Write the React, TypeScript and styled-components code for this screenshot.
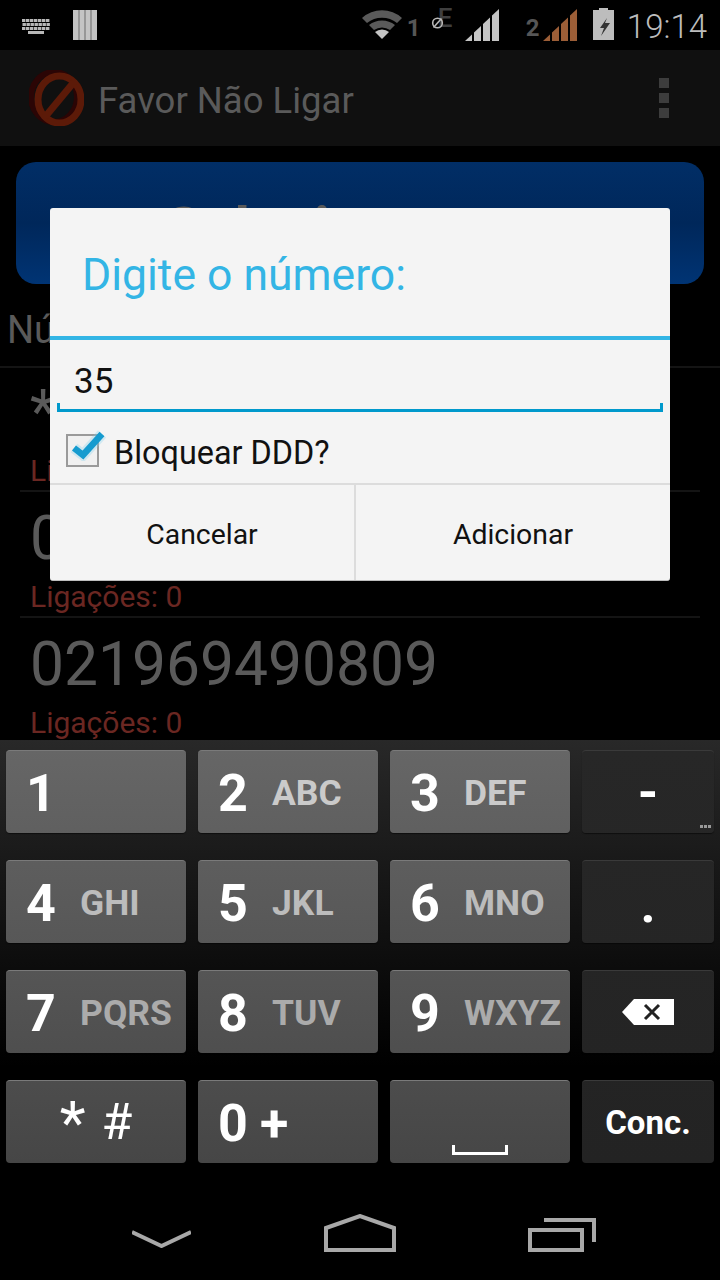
import React from 'react';
import styled, { createGlobalStyle } from 'styled-components';

const GlobalStyle = createGlobalStyle`
  html, body {
    margin: 0;
    padding: 0;
    background: #000;
  }
  * {
    box-sizing: border-box;
  }
`;

const Screen = styled.div`
  position: relative;
  width: 720px;
  height: 1280px;
  overflow: hidden;
  display: flex;
  flex-direction: column;
  background: #000;
  font-family: Roboto, "Liberation Sans", sans-serif;
`;

const StatusBar = styled.div`
  height: 50px;
  flex: none;
  display: flex;
  align-items: center;
  justify-content: space-between;
  padding: 0 13px 0 22px;
`;

const StatusGroup = styled.div`
  display: flex;
  align-items: center;
`;

const StatusIcon = styled.svg<{ $left?: number; $top?: number }>`
  display: block;
  flex: none;
  margin-left: ${p => p.$left ?? 0}px;
  margin-top: ${p => p.$top ?? 0}px;
`;

const SimLabel = styled.span<{ $left: number }>`
  margin-left: ${p => p.$left}px;
  margin-top: 5px;
  width: 12px;
  font-size: 24px;
  line-height: 28px;
  font-weight: 700;
  color: #565656;
`;

const DataBadge = styled.span`
  position: relative;
  width: 32px;
  height: 32px;
  margin-left: 12px;
  flex: none;
`;

const DataLetter = styled.span`
  position: absolute;
  left: 7px;
  top: -4px;
  font-size: 26px;
  line-height: 26px;
  font-weight: 500;
  color: #3f3f3f;
`;

const DataBlocked = styled.svg`
  position: absolute;
  left: 0;
  top: 8px;
`;

const Clock = styled.span`
  margin-left: 13px;
  margin-top: 3px;
  font-size: 33px;
  line-height: 50px;
  color: #bdbdbd;
  font-weight: 300;
`;

const ActionBar = styled.div`
  height: 96px;
  flex: none;
  display: flex;
  align-items: center;
  padding: 0 51px 0 29px;
  background: #101010;
`;

const AppTitle = styled.div`
  margin-left: 14px;
  padding-top: 4px;
  flex: 1;
  font-size: 36.5px;
  color: #5a5a5a;
`;

const OverflowMenu = styled.div`
  display: flex;
  flex-direction: column;
  gap: 5px;
`;

const OverflowDot = styled.span`
  width: 10px;
  height: 10px;
  background: #3d3d3d;
`;

const Content = styled.div`
  flex: 1;
  min-height: 0;
  overflow: hidden;
  display: flex;
  flex-direction: column;
  padding-top: 16px;
`;

const PickButton = styled.div`
  margin: 0 16px;
  height: 122px;
  flex: none;
  border-radius: 20px;
  background: linear-gradient(to bottom, #012e66 0%, #00275a 50%, #003474 100%);
  display: flex;
  align-items: center;
  padding: 10px 0 0 149px;
  font-size: 60px;
  font-weight: 700;
  color: #5a5a5a;
`;

const ListHeader = styled.div`
  height: 84px;
  flex: none;
  margin-bottom: -2px;
  display: flex;
  align-items: center;
  padding: 10px 0 0 7px;
  font-size: 38px;
  color: #5a5a5a;
  border-bottom: 2px solid #141414;
`;

const NumberRow = styled.div`
  flex: none;
  height: 126px;
  margin: 0 20px;
  padding-left: 10px;
  border-bottom: 2px solid #141414;
`;

const PhoneNumber = styled.div`
  height: 88px;
  padding-top: 4px;
  display: flex;
  align-items: center;
  font-size: 60.5px;
  color: #5a5a5a;
`;

const CallCount = styled.div`
  font-size: 30px;
  line-height: 34px;
  color: #6b2722;
`;

const Keyboard = styled.div`
  flex: none;
  height: 430px;
  padding: 10px 6px 0;
  display: grid;
  grid-template-columns: 180px 180px 180px 132px;
  grid-auto-rows: 83px;
  column-gap: 12px;
  row-gap: 27px;
  background: linear-gradient(to bottom, #282828 0%, #000 76%);
`;

const Key = styled.div<{ $dark?: boolean; $center?: boolean }>`
  position: relative;
  display: flex;
  align-items: center;
  justify-content: ${p => (p.$center ? 'center' : 'flex-start')};
  padding-left: ${p => (p.$center ? 0 : 20)}px;
  border-radius: 4px;
  color: #fff;
  background: ${p =>
    p.$dark
      ? 'linear-gradient(to bottom, #272727 750px, #232323 1163px) fixed'
      : 'linear-gradient(to bottom, #666 750px, #464646 1163px) fixed'};
  border-top: 1px solid ${p => (p.$dark ? '#3a3a3a' : '#7a7a7a')};
  box-shadow: 0 1px 1px rgba(0, 0, 0, 0.5);
`;

const Digit = styled.span`
  width: 54px;
  flex: none;
  margin-top: 3px;
  font-size: 52px;
  line-height: 83px;
  font-weight: 700;
`;

const Letters = styled.span<{ $tone: string }>`
  margin-top: 3px;
  font-size: 35.5px;
  line-height: 83px;
  font-weight: 700;
  color: ${p => p.$tone};
`;

const Plus = styled.span`
  margin-left: -12px;
  margin-top: 3px;
  font-size: 52px;
  line-height: 83px;
  font-weight: 700;
`;

const Symbols = styled.span`
  display: flex;
  gap: 16px;
  font-size: 50px;
  line-height: 83px;
`;

const Star = styled.span`
  font-size: 60px;
  line-height: 83px;
`;

const Punct = styled.span<{ $shift: number }>`
  margin-top: ${p => p.$shift}px;
  font-size: 52px;
  font-weight: 700;
  line-height: 48px;
`;

const MoreHint = styled.span`
  position: absolute;
  right: 3px;
  bottom: 5px;
  display: flex;
  gap: 1px;
`;

const MoreDot = styled.i`
  display: block;
  width: 3px;
  height: 3px;
  background: #999;
`;

const SpaceGlyph = styled.svg`
  position: absolute;
  left: 62px;
  bottom: 8px;
`;

const DoneLabel = styled.span`
  font-size: 33px;
  font-weight: 700;
`;

const NavBar = styled.div`
  height: 110px;
  flex: none;
  display: flex;
  align-items: flex-start;
  justify-content: space-between;
  padding: 0 124px 0 132px;
`;

const NavIcon = styled.svg<{ $top: number }>`
  display: block;
  margin-top: ${p => p.$top}px;
`;

const Dialog = styled.div`
  position: absolute;
  left: 50px;
  top: 208px;
  width: 620px;
  height: 373px;
  border-radius: 3px;
  background: #f4f4f4;
  border-bottom: 1px solid #bdbdbd;
  display: flex;
  flex-direction: column;
`;

const DialogTitle = styled.div`
  height: 132px;
  flex: none;
  display: flex;
  align-items: center;
  padding: 6px 0 0 32px;
  font-size: 44.5px;
  color: #33b5e5;
  border-bottom: 4px solid #33b5e5;
`;

const NumberField = styled.div`
  position: relative;
  height: 72px;
  flex: none;
  margin: 0 7px;
  padding: 14px 0 0 17px;
  font-size: 35px;
  line-height: 56px;
  color: #111;
  border-bottom: 3px solid #0099cc;

  &::before,
  &::after {
    content: '';
    position: absolute;
    bottom: 0;
    width: 3px;
    height: 6px;
    background: #0099cc;
  }
  &::before {
    left: 0;
  }
  &::after {
    right: 0;
  }
`;

const CheckRow = styled.div`
  height: 73px;
  flex: none;
  display: flex;
  align-items: center;
  padding: 11px 0 0 16px;
  gap: 15px;
  border-bottom: 2px solid #dcdcdc;
  font-size: 32.4px;
  color: #111;
`;

const CheckBox = styled.span`
  position: relative;
  width: 33px;
  height: 33px;
  flex: none;
  margin-top: -6px;
  border: 2px solid #9a9a9a;
  background: #f0f0f0;
`;

const CheckMark = styled.svg`
  position: absolute;
  left: 2px;
  top: -11px;
`;

const DialogButtons = styled.div`
  flex: 1;
  display: flex;
`;

const DialogButton = styled.div<{ $grow: number; $divider?: boolean }>`
  width: ${p => p.$grow}px;
  flex: none;
  display: flex;
  align-items: center;
  justify-content: center;
  padding-top: 3px;
  font-size: 28.4px;
  color: #111;
  border-right: ${p => (p.$divider ? '2px solid #dcdcdc' : 'none')};
`;

const Signal = ({ color, left }: { color: string; left: number }) => (
  <StatusIcon $left={left} width="34" height="32" viewBox="0 0 34 32" fill={color}>
    <polygon points="0,32 7,25.4 7,32" />
    <polygon points="9,32 9,23.5 16,17 16,32" />
    <polygon points="18,32 18,15 25,8.5 25,32" />
    <polygon points="27,32 27,6.6 34,0 34,32" />
  </StatusIcon>
);

const keypad = [
  { d: '1', l: '', tone: '#cacaca' },
  { d: '2', l: 'ABC', tone: '#cacaca' },
  { d: '3', l: 'DEF', tone: '#cacaca' },
  { d: '4', l: 'GHI', tone: '#bcbcbc' },
  { d: '5', l: 'JKL', tone: '#bcbcbc' },
  { d: '6', l: 'MNO', tone: '#bcbcbc' },
  { d: '7', l: 'PQRS', tone: '#ababab' },
  { d: '8', l: 'TUV', tone: '#ababab' },
  { d: '9', l: 'WXYZ', tone: '#ababab' },
];

const DigitKey = ({ d, l, tone }: { d: string; l: string; tone: string }) => (
  <Key>
    <Digit>{d}</Digit>
    <Letters $tone={tone}>{l}</Letters>
  </Key>
);

// keyboard status glyph: three rows of small keys and a space bar
const kbRows = [0, 4, 8];
const kbCols = [0, 4, 8, 12, 16, 20, 24];

export default function App() {
  return (
    <Screen>
      <GlobalStyle />
      <StatusBar>
        <StatusGroup>
          <StatusIcon width="29" height="15" viewBox="0 0 29 15" fill="#b8b8b8" $top={2}>
            {kbRows.map(y =>
              kbCols.map(x => <rect key={`${x}-${y}`} x={x + (y === 4 ? 0.5 : 0)} y={y} width="3.4" height="3" />)
            )}
            <rect x="6" y="12" width="16" height="3" />
          </StatusIcon>
          <StatusIcon $left={22} width="24" height="30" viewBox="0 0 24 30">
            <rect width="24" height="30" fill="#c4c4c4" />
            <rect x="5.5" width="1" height="30" fill="#6a6a6a" />
            <rect x="11.5" width="1" height="30" fill="#6a6a6a" />
            <rect x="17.5" width="1" height="30" fill="#6a6a6a" />
          </StatusIcon>
        </StatusGroup>
        <StatusGroup>
          <StatusIcon width="40" height="30" viewBox="0 0 40 30" $top={-2}>
            <path d="M0 9 A30 30 0 0 1 40 9 L35 14 A24 24 0 0 0 5 14 Z" fill="#5a5a5a" />
            <path d="M7 16 A21 21 0 0 1 33 16 L28 21 A14 14 0 0 0 12 21 Z" fill="#5a5a5a" />
            <path d="M20 30 L13 23 A11 11 0 0 1 27 23 Z" fill="#c4c4c4" />
          </StatusIcon>
          <SimLabel $left={5}>1</SimLabel>
          <DataBadge>
            <DataLetter>E</DataLetter>
            <DataBlocked width="13" height="12" viewBox="0 0 13 12" fill="none" stroke="#b8b8b8" strokeWidth="1.6">
              <circle cx="6.5" cy="6" r="4.8" />
              <path d="M2.5 10.5 L10.5 1.5" />
            </DataBlocked>
          </DataBadge>
          <Signal color="#c4c4c4" left={2} />
          <SimLabel $left={27}>2</SimLabel>
          <Signal color="#9c5e37" left={5} />
          <StatusIcon $left={16} $top={-2} width="21" height="32" viewBox="0 0 21 32">
            <path d="M6 0 H15 V2 H21 V32 H0 V2 H6 Z" fill="#bdbdbd" />
            <path d="M14 10 L7 20 H11 L8 28 L17 15 H12 Z" fill="#333" />
          </StatusIcon>
          <Clock>19:14</Clock>
        </StatusGroup>
      </StatusBar>

      <ActionBar>
        <svg width="55" height="56" viewBox="0 0 55 56" fill="none">
          <ellipse cx="25" cy="27" rx="23" ry="25" stroke="#2b0505" strokeWidth="6" />
          <ellipse cx="30.5" cy="29.5" rx="21.5" ry="23.5" stroke="#5c1a08" strokeWidth="7" />
          <path d="M16 47 L45 12" stroke="#5c1a08" strokeWidth="7" />
        </svg>
        <AppTitle>Favor Não Ligar</AppTitle>
        <OverflowMenu>
          <OverflowDot />
          <OverflowDot />
          <OverflowDot />
        </OverflowMenu>
      </ActionBar>

      <Content>
        <PickButton>Selecionar</PickButton>
        <ListHeader>Números bloqueados</ListHeader>
        <NumberRow>
          <PhoneNumber>*35</PhoneNumber>
          <CallCount>Ligações: 0</CallCount>
        </NumberRow>
        <NumberRow>
          <PhoneNumber>021969490809</PhoneNumber>
          <CallCount>Ligações: 0</CallCount>
        </NumberRow>
        <NumberRow>
          <PhoneNumber>021969490809</PhoneNumber>
          <CallCount>Ligações: 0</CallCount>
        </NumberRow>
      </Content>

      <Keyboard>
        <DigitKey {...keypad[0]} />
        <DigitKey {...keypad[1]} />
        <DigitKey {...keypad[2]} />
        <Key $dark $center>
          <Punct $shift={1}>-</Punct>
          <MoreHint>
            <MoreDot />
            <MoreDot />
            <MoreDot />
          </MoreHint>
        </Key>
        <DigitKey {...keypad[3]} />
        <DigitKey {...keypad[4]} />
        <DigitKey {...keypad[5]} />
        <Key $dark $center>
          <Punct $shift={5}>.</Punct>
        </Key>
        <DigitKey {...keypad[6]} />
        <DigitKey {...keypad[7]} />
        <DigitKey {...keypad[8]} />
        <Key $dark $center>
          <svg width="52" height="26" viewBox="0 0 52 26">
            <path d="M0 13 L12 0 H52 V26 H12 Z" fill="#fff" />
            <path d="M23 6 L37 20 M37 6 L23 20" stroke="#222" strokeWidth="3" />
          </svg>
        </Key>
        <Key $center>
          <Symbols>
            <Star>*</Star>
            <span>#</span>
          </Symbols>
        </Key>
        <Key>
          <Digit>0</Digit>
          <Plus>+</Plus>
        </Key>
        <Key $center>
          <SpaceGlyph width="56" height="10" viewBox="0 0 56 10" fill="none" stroke="#fff" strokeWidth="3">
            <path d="M1.5 0 V8.5 H54.5 V0" />
          </SpaceGlyph>
        </Key>
        <Key $dark $center>
          <DoneLabel>Conc.</DoneLabel>
        </Key>
      </Keyboard>

      <NavBar>
        <NavIcon $top={60} width="59" height="18" viewBox="0 0 59 18" fill="none" stroke="#a8a8a8" strokeWidth="4">
          <path d="M0 2 L29.5 16 L59 2" />
        </NavIcon>
        <NavIcon $top={44} width="72" height="38" viewBox="0 0 72 38" fill="none" stroke="#a8a8a8" strokeWidth="4">
          <path d="M2 14 L36 2 L70 14 V36 H2 Z" />
        </NavIcon>
        <NavIcon $top={48} width="68" height="34" viewBox="0 0 68 34" fill="none" stroke="#a8a8a8" strokeWidth="4">
          <rect x="2" y="12" width="52" height="20" />
          <path d="M16 2 H66 V24" />
        </NavIcon>
      </NavBar>

      <Dialog>
        <DialogTitle>Digite o número:</DialogTitle>
        <NumberField>35</NumberField>
        <CheckRow>
          <CheckBox>
            <CheckMark width="36" height="36" viewBox="0 0 36 36" fill="none">
              <path d="M4 23 L13 30 L32 9" stroke="#7fd0ee" strokeWidth="11" opacity="0.3" />
              <path d="M4 23 L13 30 L32 9" stroke="#159bcf" strokeWidth="6.5" />
            </CheckMark>
          </CheckBox>
          Bloquear DDD?
        </CheckRow>
        <DialogButtons>
          <DialogButton $grow={306} $divider>
            Cancelar
          </DialogButton>
          <DialogButton $grow={314}>Adicionar</DialogButton>
        </DialogButtons>
      </Dialog>
    </Screen>
  );
}
